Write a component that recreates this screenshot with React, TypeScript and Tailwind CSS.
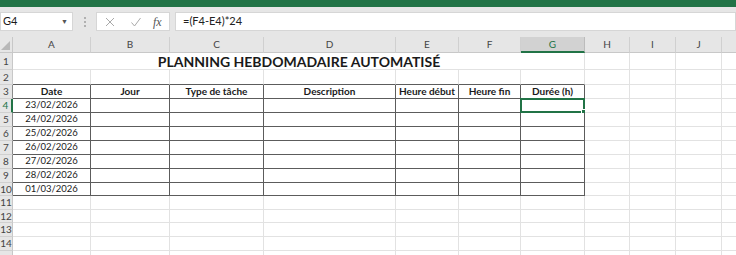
import React from "react"

const cols = [
  { key: "A", w: 78 },
  { key: "B", w: 79 },
  { key: "C", w: 94 },
  { key: "D", w: 132 },
  { key: "E", w: 63 },
  { key: "F", w: 62 },
  { key: "G", w: 64 },
  { key: "H", w: 45 },
  { key: "I", w: 46 },
  { key: "J", w: 46 },
  { key: "K", w: 30 },
]

const heights = [17, 15, 14, 14, 14, 14, 14, 14, 14, 13, 14, 13, 14, 14, 14]

const headers = ["Date", "Jour", "Type de tâche", "Description", "Heure début", "Heure fin", "Durée (h)"]
const dates = ["23/02/2026", "24/02/2026", "25/02/2026", "26/02/2026", "27/02/2026", "28/02/2026", "01/03/2026"]

const font = { fontFamily: "Lato, 'Open Sans', sans-serif" }

function Cell({ row, ci, w, h }: { row: number; ci: number; w: number; h: number }) {
  const inTable = row >= 3 && row <= 10 && ci <= 6
  const aboveTable = row === 2 && ci <= 6
  const merged = row === 1 && ci < 6
  let border = "border-r border-b border-[#e2e2e2]"
  if (inTable) border = "border-r border-b border-[#5c5c5c]"
  else if (aboveTable) border = "border-r border-b border-r-[#e2e2e2] border-b-[#5c5c5c]"
  else if (merged) border = "border-b border-[#e2e2e2]"

  let content: React.ReactNode = null
  if (row === 3 && ci <= 6) content = <span className="font-bold text-[10px]">{headers[ci]}</span>
  if (row >= 4 && row <= 10 && ci === 0) content = <span className="text-[9.5px]">{dates[row - 4]}</span>

  return (
    <div
      className={`relative flex shrink-0 items-center justify-center overflow-visible ${border}`}
      style={{ width: w, height: h }}
    >
      {content}
      {row === 4 && ci === 6 && (
        <div className="absolute -left-px -top-px -right-px -bottom-px border-2 border-[#217346]">
          <div className="absolute -right-[3px] -bottom-[3px] h-[5px] w-[5px] border border-white bg-[#217346]" />
        </div>
      )}
    </div>
  )
}

export default function App() {
  return (
    <div className="h-[255px] w-[736px] overflow-hidden bg-white text-[#1a1a1a]" style={font}>
      {/* ruban vert */}
      <div className="h-[7px] bg-[#217346]" />

      {/* barre de formule */}
      <div className="flex h-[30px] items-start bg-[#e6e6e6] pt-[5px]">
        <div className="flex h-[19px] w-[73px] items-center justify-between border border-[#d6d6d6] bg-white pl-[2px] pr-[4px] text-[11px]">
          <span>G4</span>
          <span className="text-[7px] text-[#555]">▼</span>
        </div>
        <div className="flex w-[23px] flex-col items-center justify-center gap-[2px] pt-[5px]">
          <span className="h-[2px] w-[2px] bg-[#b0b0b0]" />
          <span className="h-[2px] w-[2px] bg-[#b0b0b0]" />
          <span className="h-[2px] w-[2px] bg-[#b0b0b0]" />
        </div>
        <div className="flex h-[19px] w-[74px] items-center border border-[#d6d6d6] bg-white">
          <svg width="12" height="12" viewBox="0 0 12 12" className="ml-[7px]">
            <path d="M2 2 L10 10 M10 2 L2 10" stroke="#a9a9a9" strokeWidth="1" fill="none" />
          </svg>
          <svg width="12" height="12" viewBox="0 0 12 12" className="ml-[14px]">
            <path d="M1.5 6.5 L4.5 10 L10.5 2" stroke="#a9a9a9" strokeWidth="1" fill="none" />
          </svg>
          <span
            className="ml-[11px] text-[12px] italic text-[#555]"
            style={{ fontFamily: "'Liberation Serif', serif" }}
          >
            fx
          </span>
        </div>
        <div className="ml-[5px] flex h-[19px] flex-1 items-center border border-[#d6d6d6] bg-white pl-[7px] text-[11px] text-[#222]">
          =(F4-E4)*24
        </div>
      </div>

      {/* en-têtes de colonnes */}
      <div className="flex h-[16px] bg-[#e6e6e6]">
        <div className="relative h-[16px] w-[13px] shrink-0 border-r border-b border-[#c8c8c8]">
          <svg width="9" height="9" className="absolute bottom-[2px] right-[2px]">
            <path d="M9 0 L9 9 L0 9 Z" fill="#b8b8b8" />
          </svg>
        </div>
        {cols.map((c) => (
          <div
            key={c.key}
            className={`flex shrink-0 items-center justify-center border-r text-[10px] ${
              c.key === "G"
                ? "border-r-[#bcbcbc] border-b-2 border-b-[#217346] bg-[#d2d2d2] text-[#217346]"
                : "border-r-[#d0d0d0] border-b border-b-[#c8c8c8] text-[#444]"
            }`}
            style={{ width: c.w }}
          >
            {c.key === "K" ? "" : c.key}
          </div>
        ))}
      </div>

      {/* grille */}
      <div className="relative">
        {heights.map((h, i) => {
          const row = i + 1
          const inTable = row >= 3 && row <= 10
          return (
            <div key={row} className="flex">
              <div
                className={`flex w-[13px] shrink-0 items-center justify-center border-b border-[#d0d0d0] bg-[#e6e6e6] text-[10px] ${
                  row === 4
                    ? "border-r-2 border-r-[#217346] bg-[#d2d2d2] text-[#217346]"
                    : inTable
                    ? "border-r border-r-[#8a8a8a] text-[#444]"
                    : "border-r border-r-[#c8c8c8] text-[#444]"
                }`}
                style={{ height: h }}
              >
                {row < 15 ? row : ""}
              </div>
              {cols.map((c, ci) => (
                <Cell key={c.key} row={row} ci={ci} w={c.w} h={h} />
              ))}
            </div>
          )
        })}
        {/* titre fusionné A1:G1 */}
        <div className="absolute left-[13px] top-0 flex h-[17px] w-[572px] items-center justify-center text-[14px] font-bold">
          PLANNING HEBDOMADAIRE AUTOMATISÉ
        </div>
      </div>
    </div>
  )
}
